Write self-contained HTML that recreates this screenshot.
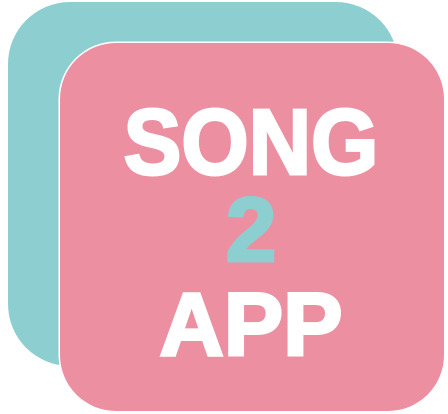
<!DOCTYPE html>
<html><head><style>
html,body{margin:0;padding:0;width:448px;height:414px;background:#fff;overflow:hidden;position:relative;font-family:"Liberation Sans",Arial,sans-serif;}
.t{position:absolute;left:8px;top:2px;width:390px;height:364px;background:#8dcfd0;border-radius:62px;}
.p{position:absolute;left:60px;top:43px;width:384px;height:368px;background:#ec8fa1;border-radius:56px;box-shadow:0 0 0 1.5px #fff;}
.w{position:absolute;left:0;width:448px;text-align:center;font-weight:bold;line-height:1;white-space:nowrap;}
</style></head><body>
<div class="t"></div>
<div class="p"></div>
<div class="w" style="top:96px;left:251px;width:0;"><span style="display:inline-block;transform:translateX(-50%) scaleX(0.93);font-size:93px;color:#fff;-webkit-text-stroke:3px #fff;">SONG</span></div>
<div class="w" style="top:185px;left:251px;width:0;"><span style="display:inline-block;transform:translateX(-50%);font-size:91px;color:#8dcfd0;-webkit-text-stroke:3px #8dcfd0;">2</span></div>
<div class="w" style="top:280px;left:251px;width:0;"><span style="display:inline-block;transform:translateX(-50%);font-size:89px;color:#fff;-webkit-text-stroke:3px #fff;">APP</span></div>
</body></html>
